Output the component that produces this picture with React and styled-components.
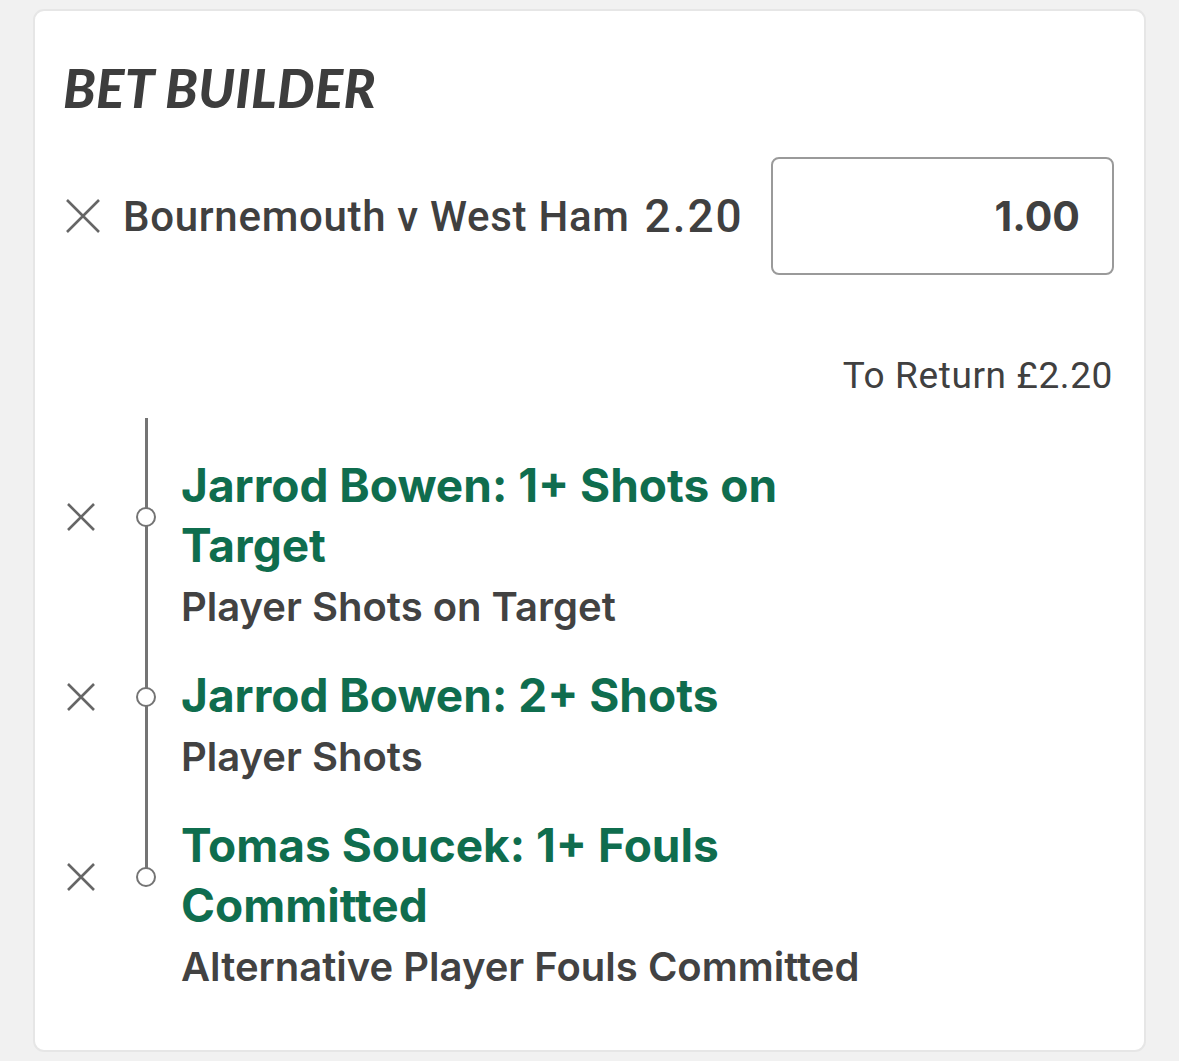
import React from "react";
import styled, { createGlobalStyle } from "styled-components";

const Global = createGlobalStyle`
  html, body { margin: 0; padding: 0; background: #f1f1f1; }
  body { font-family: "Inter", "Roboto", sans-serif; -webkit-font-smoothing: antialiased; }
`;

const Page = styled.div`
  padding: 9px 33px 9px 33px;
`;

const Card = styled.section`
  background: #fff;
  border: 2px solid #e6e6e6;
  border-radius: 11px;
  box-sizing: border-box;
  height: 1043px;
  padding: 47px 30px 0 28px;
`;

const Title = styled.h1`
  margin: 0;
  font-family: "Lato", sans-serif;
  font-style: italic;
  font-weight: 900;
  font-size: 53px;
  line-height: 60px;
  letter-spacing: 0.3px;
  color: #3d3d3d;
`;

const BetRow = styled.div`
  display: flex;
  align-items: center;
  margin-top: 39px;
  height: 118px;
`;

const CloseBtn = styled.button`
  display: flex;
  align-items: center;
  justify-content: center;
  padding: 0;
  border: 0;
  background: none;
  margin-left: ${(p) => p.$offset || 0}px;
  width: ${(p) => p.$size}px;
  height: ${(p) => p.$size}px;
  flex: none;
`;

const Event = styled.span`
  margin-left: 23px;
  font-family: "Roboto", sans-serif;
  font-weight: 500;
  font-size: 42px;
  letter-spacing: 0.7px;
  color: #404040;
  white-space: nowrap;
`;

const Odds = styled.span`
  margin-left: 15px;
  font-family: "Roboto", sans-serif;
  font-weight: 500;
  font-size: 46px;
  letter-spacing: 2px;
  color: #404040;
`;

const Stake = styled.div`
  margin-left: auto;
  box-sizing: border-box;
  width: 343px;
  height: 118px;
  border: 2.5px solid #9a9a9a;
  border-radius: 8px;
  display: flex;
  align-items: center;
  justify-content: flex-end;
  padding-right: 32px;
  font-family: "Inter", sans-serif;
  font-weight: 700;
  font-size: 41px;
  color: #404040;
`;

const Return = styled.div`
  margin-top: 81px;
  text-align: right;
  font-family: "Roboto", sans-serif;
  font-weight: 400;
  font-size: 37px;
  letter-spacing: 0.6px;
  line-height: 40px;
  color: #404040;
  padding-right: 1px;
`;

const Legs = styled.div`
  margin-top: 22px;
`;

const Leg = styled.div`
  display: grid;
  grid-template-columns: 55px 56px 1fr;
`;

const RailLead = styled.div`
  display: grid;
  grid-template-columns: 55px 56px 1fr;
  height: 39px;
`;

const railBg = {
  full: "linear-gradient(#747474, #747474) center top / 3px 100% no-repeat",
  top: "linear-gradient(#747474, #747474) center top / 3px 50% no-repeat",
  none: "none",
};

const Rail = styled.div`
  grid-column: 2;
  grid-row: ${(p) => p.$row || 1};
  display: flex;
  align-items: center;
  justify-content: center;
  background: ${(p) => railBg[p.$line]};
`;

const XCell = styled.div`
  grid-column: 1;
  display: flex;
  align-items: center;
  padding-left: 4px;
`;

const Dot = styled.span`
  box-sizing: border-box;
  width: 20px;
  height: 20px;
  border-radius: 50%;
  border: 2.5px solid #747474;
  background: #fff;
`;

const LegTitle = styled.div`
  grid-column: 3;
  padding-left: 7px;
  max-width: 640px;
  font-family: "Inter", sans-serif;
  font-weight: 700;
  font-size: 46px;
  line-height: 60px;
  margin-top: -2px;
  margin-bottom: 2px;
  color: #0f6d4e;
`;

const LegMarket = styled.div`
  grid-column: 3;
  grid-row: 2;
  padding-left: 7px;
  padding-bottom: ${(p) => (p.$last ? 0 : 31)}px;
  font-family: "Inter", sans-serif;
  font-weight: 600;
  font-size: 40px;
  line-height: 59px;
  color: #424242;
  white-space: nowrap;
`;

const Cross = ({ size, stroke = 2.6 }) => (
  <svg width={size} height={size} viewBox={`0 0 ${size} ${size}`} fill="none">
    <path
      d={`M1 1 L${size - 1} ${size - 1} M${size - 1} 1 L1 ${size - 1}`}
      stroke="#666"
      strokeWidth={stroke}
    />
  </svg>
);

const legs = [
  { title: "Jarrod Bowen: 1+ Shots on Target", market: "Player Shots on Target" },
  { title: "Jarrod Bowen: 2+ Shots", market: "Player Shots" },
  { title: "Tomas Soucek: 1+ Fouls Committed", market: "Alternative Player Fouls Committed" },
];

export default function App() {
  return (
    <Page>
      <Global />
      <Card>
        <Title>BET BUILDER</Title>
        <BetRow>
          <CloseBtn $size={34} $offset={3} aria-label="Remove">
            <Cross size={34} />
          </CloseBtn>
          <Event>Bournemouth v West Ham</Event>
          <Odds>2.20</Odds>
          <Stake>1.00</Stake>
        </BetRow>
        <Return>To Return £2.20</Return>
        <Legs>
          <RailLead>
            <Rail $line="full" />
          </RailLead>
          {legs.map((leg, i) => {
            const last = i === legs.length - 1;
            return (
              <Leg key={i}>
                <XCell>
                  <CloseBtn $size={28} aria-label="Remove selection">
                    <Cross size={28} />
                  </CloseBtn>
                </XCell>
                <Rail $line={last ? "top" : "full"}>
                  <Dot />
                </Rail>
                <LegTitle>{leg.title}</LegTitle>
                <Rail $row={2} $line={last ? "none" : "full"} />
                <LegMarket $last={last}>{leg.market}</LegMarket>
              </Leg>
            );
          })}
        </Legs>
      </Card>
    </Page>
  );
}
